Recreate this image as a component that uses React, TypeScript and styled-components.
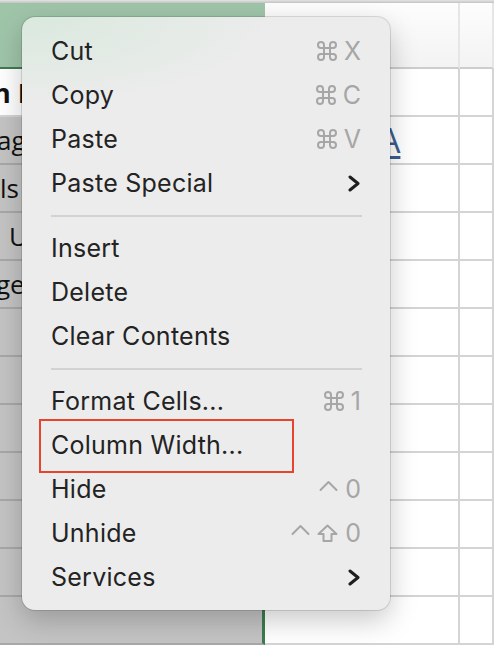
import React from "react";
import styled, { createGlobalStyle, css } from "styled-components";

const GlobalStyle = createGlobalStyle`
  html, body {
    margin: 0;
    padding: 0;
    overflow: hidden;
    background: #ffffff;
  }
`;

const Sheet = styled.div`
  position: relative;
  width: 494px;
  height: 646px;
  overflow: hidden;
  background: #ffffff;
  font-family: "Open Sans", "Liberation Sans", sans-serif;
`;

const TopEdge = styled.div`
  height: 3px;
  background: linear-gradient(to bottom, #e4e4e4, #c3c3c3);
`;

const GridRow = styled.div<{ $height: number }>`
  display: grid;
  grid-template-columns: 265px 195px 1fr;
  height: ${p => p.$height}px;
`;

const ColHeader = styled.div<{ $selected?: boolean }>`
  box-sizing: border-box;
  border-bottom: 2px solid ${p => (p.$selected ? "#3f7b51" : "#cdcdcd")};
  background: ${p =>
    p.$selected ? "#9fc5a9" : "linear-gradient(to bottom, #fdfdfd, #f3f3f3)"};
  border-right: ${p => (p.$selected ? "none" : "2px solid #e6e6e6")};
`;

const Cell = styled.div<{ $selected?: boolean; $active?: boolean }>`
  box-sizing: border-box;
  display: flex;
  align-items: center;
  overflow: hidden;
  white-space: nowrap;
  border-bottom: 2px solid #d4d4d4;
  border-right: 2px solid #d4d4d4;
  ${p =>
    p.$selected &&
    css`
      background: ${p.$active ? "#ffffff" : "#c4c4c4"};
      border-right: 3px solid #3d7b4f;
      border-bottom-color: ${p.$active ? "#d4d4d4" : "#a8a8a8"};
    `}
`;

const CellText = styled.span<{ $shift: number; $bold?: boolean }>`
  margin-left: ${p => p.$shift}px;
  font-size: ${p => (p.$bold ? 27 : 26)}px;
  font-weight: ${p => (p.$bold ? 700 : 400)};
  color: #111111;
`;

const LinkText = styled.span`
  margin-left: 49px;
  font-size: 34px;
  color: #3b5d8b;
  text-decoration: underline;
  text-underline-offset: 3px;
`;

const Menu = styled.div`
  position: absolute;
  left: 22px;
  top: 17px;
  width: 368px;
  box-sizing: border-box;
  padding: 12px 0 11px;
  border-radius: 13px;
  background:
    radial-gradient(ellipse 260px 90px at 0% 0%, rgba(214, 232, 219, 0.85), rgba(236, 236, 236, 0)),
    #ececec;
  box-shadow:
    0 0 0 1px rgba(0, 0, 0, 0.12),
    0 10px 28px rgba(0, 0, 0, 0.22);
  font-family: Inter, "Noto Sans", "Liberation Sans", sans-serif;
`;

const Item = styled.div<{ $highlighted?: boolean }>`
  position: relative;
  height: 44px;
  display: flex;
  align-items: center;
  justify-content: space-between;
  padding: 0 29px;
  font-size: 25px;
  letter-spacing: 0.25px;
  color: #232323;
  ${p =>
    p.$highlighted &&
    css`
      &::after {
        content: "";
        position: absolute;
        left: 17px;
        top: -4px;
        width: 255px;
        height: 54px;
        box-sizing: border-box;
        border: 2px solid #e8432d;
      }
    `}
`;

const Separator = styled.div`
  height: 21px;
  display: flex;
  align-items: center;
  padding: 0 28px 0 29px;

  &::before {
    content: "";
    flex: 1;
    height: 2px;
    background: #d2d2d2;
  }
`;

const Keys = styled.span`
  display: flex;
  align-items: center;
  gap: 7px;
  color: #a6a6a6;
  font-size: 25px;
  letter-spacing: 0;
`;

const Glyph = styled.svg`
  display: block;
  overflow: visible;
  fill: none;
  stroke: #a6a6a6;
  stroke-width: 2;
  stroke-linecap: round;
  stroke-linejoin: round;
`;

const CommandKey = () => (
  <Glyph width="20" height="20" viewBox="2 2 20 20">
    <path d="M15 6v12a3 3 0 1 0 3-3H6a3 3 0 1 0 3 3V6a3 3 0 1 0-3 3h12a3 3 0 1 0-3-3" />
  </Glyph>
);

const ControlKey = () => (
  <Glyph width="19" height="18" viewBox="0 0 19 18">
    <polyline points="1.5,10 9.5,2 17.5,10" />
  </Glyph>
);

const ShiftKey = () => (
  <Glyph width="21" height="18" viewBox="0 0 21 18">
    <path d="M10.5 1.5 L19.5 10 H14.5 V17 H6.5 V10 H1.5 Z" />
  </Glyph>
);

const Chevron = styled.svg`
  display: block;
  margin-right: 1px;
  fill: none;
  stroke: #1e1e1e;
  stroke-width: 3;
  stroke-linecap: round;
  stroke-linejoin: round;
`;

type Key = "cmd" | "ctrl" | "shift" | string;

type MenuEntry = {
  label: string;
  keys?: Key[];
  submenu?: boolean;
  highlighted?: boolean;
};

const sections: MenuEntry[][] = [
  [
    { label: "Cut", keys: ["cmd", "X"] },
    { label: "Copy", keys: ["cmd", "C"] },
    { label: "Paste", keys: ["cmd", "V"] },
    { label: "Paste Special", submenu: true }
  ],
  [{ label: "Insert" }, { label: "Delete" }, { label: "Clear Contents" }],
  [
    { label: "Format Cells...", keys: ["cmd", "1"] },
    { label: "Column Width...", highlighted: true },
    { label: "Hide", keys: ["ctrl", "0"] },
    { label: "Unhide", keys: ["ctrl", "shift", "0"] },
    { label: "Services", submenu: true }
  ]
];

const renderKey = (key: Key, i: number) => {
  if (key === "cmd") return <CommandKey key={i} />;
  if (key === "ctrl") return <ControlKey key={i} />;
  if (key === "shift") return <ShiftKey key={i} />;
  return <span key={i}>{key}</span>;
};

// column A is scrolled partly out of view, so each cell's text starts at its own offset
const rows = [
  { text: "n Errors", bold: true, active: true, shift: -7 },
  { text: "ages", shift: -3, link: "DATA" },
  { text: "ls", shift: 0 },
  { text: "Units", shift: 9 },
  { text: "ges", shift: -4 },
  { text: "" },
  { text: "" },
  { text: "" },
  { text: "" },
  { text: "" },
  { text: "" },
  { text: "" }
];

const App = () => {
  return (
    <>
      <GlobalStyle />
      <Sheet>
        <TopEdge />
        <GridRow $height={66}>
          <ColHeader $selected />
          <ColHeader />
          <ColHeader />
        </GridRow>
        {rows.map((row, i) => (
          <GridRow key={i} $height={48}>
            <Cell $selected $active={row.active}>
              {row.text && (
                <CellText $shift={row.shift ?? 0} $bold={row.bold}>
                  {row.text}
                </CellText>
              )}
            </Cell>
            <Cell>{row.link && <LinkText>{row.link}</LinkText>}</Cell>
            <Cell />
          </GridRow>
        ))}

        <Menu>
          {sections.map((section, s) => (
            <React.Fragment key={s}>
              {s > 0 && <Separator />}
              {section.map(entry => (
                <Item key={entry.label} $highlighted={entry.highlighted}>
                  <span>{entry.label}</span>
                  {entry.keys && <Keys>{entry.keys.map(renderKey)}</Keys>}
                  {entry.submenu && (
                    <Chevron width="12" height="17" viewBox="0 0 12 17">
                      <polyline points="2,2 10,8.5 2,15" />
                    </Chevron>
                  )}
                </Item>
              ))}
            </React.Fragment>
          ))}
        </Menu>
      </Sheet>
    </>
  );
};

export default App;
